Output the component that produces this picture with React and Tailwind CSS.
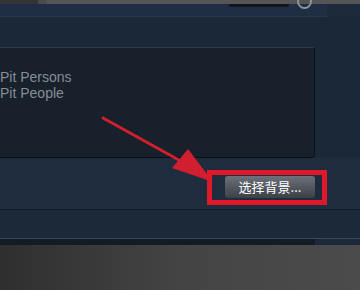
import React from 'react';

const App = () => {
  return (
    <div className="relative w-[360px] h-[290px] overflow-hidden bg-[#1b2838]" style={{ fontFamily: '"Liberation Sans", Arial, sans-serif' }}>
      {/* top strip */}
      <div className="flex h-[4px]">
        <div className="w-[38px] bg-[#343434]" />
        <div className="w-[8px] bg-[#4b4b4b]" />
        <div className="flex-1 bg-[#555555]" />
      </div>

      {/* header panel */}
      <div className="flex h-[13px]">
        <div className="relative w-[327px] bg-[#1f2e42] border-b border-[#26364b]">
          <div className="absolute left-[229px] top-0 w-[60px] h-[3px] bg-[#0f1620] rounded-b-[2px]" />
          <div className="absolute left-[297px] top-[-10px] w-[15px] h-[15px] rounded-full border-2 border-[#8d949c]" />
        </div>
        <div className="flex-1 bg-[#1c2a3b]" />
      </div>

      <div className="h-[30px]" />

      {/* content box */}
      <div className="flex">
        <div className="w-[315px] h-[111px] bg-[#17202b] border-t border-[#2d3b4c] border-r border-b border-r-[#0b1017] border-b-[#0b1017] rounded-br-[3px] pt-[21px] text-[14px] leading-[16px] text-[#868d95]">
          <div>Pit Persons</div>
          <div>Pit People</div>
        </div>
      </div>

      {/* button section */}
      <div className="flex justify-end h-[51px] bg-[#1e2c3e] pt-[18px] pr-[45px]">
        <button
          className="w-[90px] h-[22px] rounded-[3px] bg-gradient-to-b from-[#6c717a] to-[#3c4148] text-white text-[13px] leading-[22px] text-center"
          style={{ fontFamily: '"Noto Sans CJK SC", "Liberation Sans", sans-serif' }}
        >
          选择背景...
        </button>
      </div>

      <div className="h-[1px] bg-[#131a24]" />
      <div className="h-[28px] bg-[#1c2938]" />
      <div className="h-[1px] bg-[#3a4859]" />
      <div className="flex h-[6px]">
        <div className="w-[315px] bg-[#131b25]" />
        <div className="flex-1 bg-[#1b2838]" />
      </div>

      {/* desk below */}
      <div className="h-[45px] bg-gradient-to-r from-[#2f2f2f] via-[#444444] to-[#4b4b4b]" />

      {/* annotation overlay */}
      <svg className="absolute left-0 top-0" width="360" height="290" viewBox="0 0 360 290">
        <line x1="103" y1="118" x2="186" y2="164" stroke="#d11f2f" strokeWidth="3" strokeLinecap="round" />
        <polygon points="213,182 172,168 188,149" fill="#d11f2f" />
        <rect x="209.5" y="172.5" width="115" height="30" fill="none" stroke="#e0182b" strokeWidth="5" />
      </svg>
    </div>
  );
};

export default App;
